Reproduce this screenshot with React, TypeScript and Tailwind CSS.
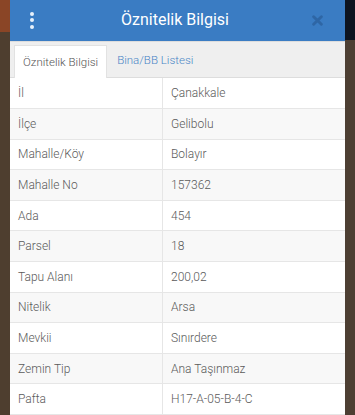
import React from 'react';

// Attribute rows shown in the table
const rows: [string, string][] = [
  ['İl', 'Çanakkale'],
  ['İlçe', 'Gelibolu'],
  ['Mahalle/Köy', 'Bolayır'],
  ['Mahalle No', '157362'],
  ['Ada', '454'],
  ['Parsel', '18'],
  ['Tapu Alanı', '200,02'],
  ['Nitelik', 'Arsa'],
  ['Mevkii', 'Sınırdere'],
  ['Zemin Tip', 'Ana Taşınmaz'],
  ['Pafta', 'H17-A-05-B-4-C'],
];

export default function App() {
  return (
    <div
      className="w-[355px] h-[415px] overflow-hidden flex bg-[#4b3d30]"
      style={{ fontFamily: 'Roboto, "Noto Sans", sans-serif' }}
    >
      {/* backdrop strips */}
      <div className="w-[10px] flex flex-col">
        <div className="h-[32px] bg-[#8a4526]" />
        <div className="flex-1 bg-[#4e3e2f]" />
      </div>

      {/* Modal */}
      <div className="w-[335px] flex flex-col bg-white">
        {/* Header */}
        <div className="h-[41px] bg-[#3a7cc3] flex items-center px-[20px]">
          <div className="flex flex-col gap-[2.5px]">
            <span className="w-[4px] h-[4px] rounded-full bg-[#e8f1fb]" />
            <span className="w-[4px] h-[4px] rounded-full bg-[#e8f1fb]" />
            <span className="w-[4px] h-[4px] rounded-full bg-[#e8f1fb]" />
          </div>
          <div className="flex-1 text-center text-white text-[16px] pl-[4px]">Öznitelik Bilgisi</div>
          <svg width="11" height="11" viewBox="0 0 10 10" className="mr-[2px]">
            <path d="M1.5 1.5 L8.5 8.5 M8.5 1.5 L1.5 8.5" stroke="#2e66a5" strokeWidth="2.6" strokeLinecap="round" />
          </svg>
        </div>

        {/* Tabs */}
        <div className="h-[38px] bg-[#efefef] border-t border-[#dce9f6] flex items-end px-[4px] border-b border-[#dddddd]">
          <div className="h-[33px] px-[8px] bg-white border border-b-0 border-[#e2e2e2] flex items-center text-[11.5px] font-light text-[#555] -mb-px">
            Öznitelik Bilgisi
          </div>
          <div className="h-[33px] px-[10px] flex items-center text-[11.5px] font-light text-[#4a86c6]">
            Bina/BB Listesi
          </div>
        </div>

        {/* Table */}
        <div className="flex-1 flex flex-col">
          {rows.map(([k, v], i) => (
            <div
              key={k}
              className={`h-[30.6px] flex text-[12px] font-light text-[#5a5a5a] border-b border-[#e6e6e6] ${
                i % 2 === 1 ? 'bg-[#f8f8f8]' : 'bg-white'
              }`}
            >
              <div className="w-[153px] border-r border-[#e6e6e6] flex items-center pl-[8px]">{k}</div>
              <div className="flex-1 flex items-center pl-[8px]">{v}</div>
            </div>
          ))}
        </div>
      </div>

      <div className="w-[10px] flex flex-col">
        <div className="h-[40px] bg-[#0d1420]" />
        <div className="flex-1 bg-[#4d3f33]" />
      </div>
    </div>
  );
}
